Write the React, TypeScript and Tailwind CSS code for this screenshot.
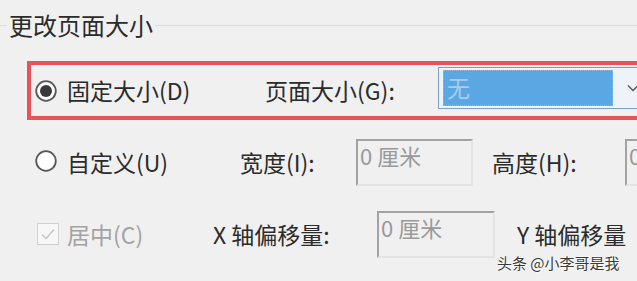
import React from "react";

const FONT = { fontFamily: '"Noto Sans CJK SC", "Noto Sans", sans-serif' };

function Radio({ checked }: { checked?: boolean }) {
  return (
    <svg width="22" height="22" viewBox="0 0 22 22" className="shrink-0">
      <circle cx="11" cy="11" r="9.8" fill="#ffffff" stroke="#575757" strokeWidth="1.8" />
      {checked && <circle cx="11" cy="11" r="6" fill="#3a3a3a" />}
    </svg>
  );
}

function Check() {
  return (
    <svg width="22" height="22" viewBox="0 0 22 22" className="shrink-0">
      <rect x="0.5" y="0.5" width="21" height="21" fill="#f7f7f7" stroke="#cfcfcf" />
      <path d="M5 11.5 L9 15.5 L17 6.5" fill="none" stroke="#c4c4c4" strokeWidth="1.4" />
    </svg>
  );
}

function Field({ value, width }: { value: string; width: string }) {
  return (
    <div
      className={`${width} h-[47px] shrink-0 border-2 border-t-[#a3a3a3] border-l-[#a3a3a3] border-r-[#e4e4e4] border-b-[#e4e4e4] bg-[#f0f0f0] pl-[2px] text-[22px] leading-[28px] text-[#9a9a9a]`}
    >
      {value}
    </div>
  );
}

export default function App() {
  return (
    <div
      className="relative w-[637px] h-[281px] overflow-hidden bg-[#f0f0f0] text-[#2b2b2b]"
      style={FONT}
    >
      {/* Group header */}
      <div className="flex h-[50px] items-center">
        <div className="w-[7px] h-px bg-[#dcdcdc]" />
        <span className="px-[2px] text-[24px] leading-none">更改页面大小</span>
        <div className="flex-1 h-px bg-[#dcdcdc]" />
      </div>

      {/* Fixed size row, highlighted */}
      <div className="mt-[11px] ml-[27px] w-[640px] h-[59px] border-4 border-[#ea525a] flex items-center">
        <div className="w-[234px] shrink-0 pl-[4px] flex items-center gap-[10px]">
          <Radio checked />
          <span className="text-[23px] leading-none">固定大小(D)</span>
        </div>
        <div className="w-[173px] shrink-0 text-[23px] leading-none">页面大小(G):</div>
        <div className="w-[220px] h-[42px] shrink-0 -mt-[6px] border border-[#7c9fcb] bg-[#eef3f9] flex items-center pl-[4px]">
          <div className="w-[170px] h-[36px] bg-[#5ba7e3] border border-dotted border-[#9ab4cc] pl-[3px] text-[23px] leading-[32px] text-[#a9cdee]">
            无
          </div>
          <svg width="12" height="8" viewBox="0 0 12 8" className="ml-[14px]">
            <path d="M1 1.5 L6 6.5 L11 1.5" fill="none" stroke="#555" strokeWidth="1.3" />
          </svg>
        </div>
      </div>

      {/* Custom size row */}
      <div className="mt-[18px] h-[48px] flex items-center">
        <div className="w-[240px] shrink-0 pl-[35px] flex items-center gap-[10px]">
          <div className="-mt-[3px]">
            <Radio />
          </div>
          <span className="text-[23px] leading-none">自定义(U)</span>
        </div>
        <div className="w-[116px] shrink-0 text-[23px] leading-none">宽度(I):</div>
        <Field value="0 厘米" width="w-[117px]" />
        <div className="w-[152px] shrink-0 pl-[19px] text-[23px] leading-none">高度(H):</div>
        <Field value="0 厘米" width="w-[117px]" />
      </div>

      {/* Center / offsets row */}
      <div className="mt-[24px] h-[48px] flex items-center">
        <div className="w-[213px] shrink-0 pl-[37px] flex items-center gap-[8px]">
          <Check />
          <span className="text-[23px] leading-none text-[#a3a3a3]">居中(C)</span>
        </div>
        <div className="w-[164px] shrink-0 text-[23px] leading-none">X 轴偏移量:</div>
        <Field value="0 厘米" width="w-[118px]" />
        <div className="shrink-0 pl-[22px] text-[23px] leading-none whitespace-nowrap">Y 轴偏移量</div>
      </div>

      {/* Watermark */}
      <div
        className="absolute left-[497px] top-[255px] text-[15px] leading-none text-[#3a3a3a] whitespace-nowrap"
        style={{ textShadow: "0 0 2px #ffffff, 0 0 2px #ffffff" }}
      >
        头条 @小李哥是我
      </div>
    </div>
  );
}
